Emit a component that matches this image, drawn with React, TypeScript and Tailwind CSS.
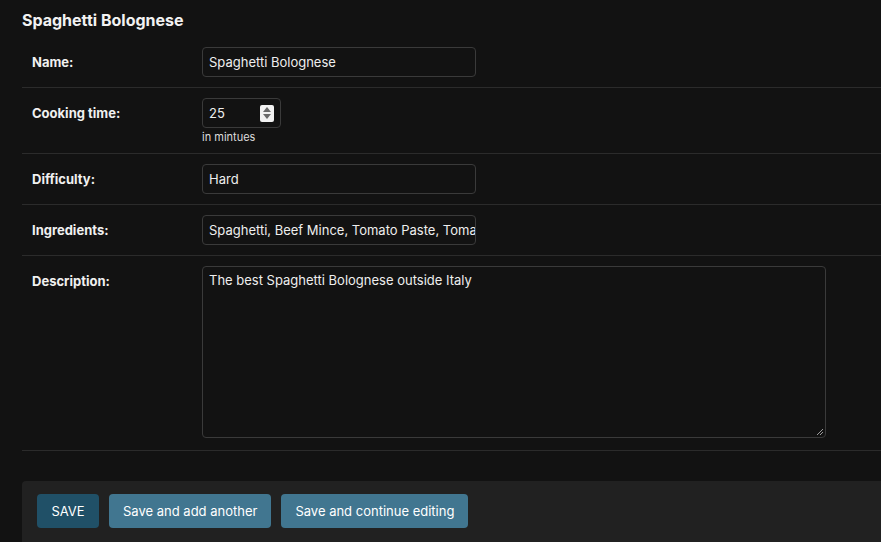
import React from "react";

const font = { fontFamily: 'Inter, "Noto Sans", sans-serif' };

function Row({ label, children }: { label: string; children: React.ReactNode }) {
  return (
    <div className="flex items-start border-b border-[#2b2b2b] p-[10px]">
      <label className="w-[170px] shrink-0 pt-[6px] text-[13px] font-bold text-[#f0f0f0]">{label}</label>
      <div className="flex flex-col">{children}</div>
    </div>
  );
}

export default function App() {
  return (
    <div className="min-h-[542px] w-[881px] overflow-hidden bg-[#121212] pl-[22px] text-[#eeeeee]" style={font}>
      <h2 className="pt-[10px] pb-[7px] text-[16px] font-bold leading-[20px] text-[#f2f2f2]">Spaghetti Bolognese</h2>
      <div className="w-[900px]">
        <Row label="Name:">
          <div className="flex h-[30px] w-[274px] items-center rounded-[4px] border border-[#3a3a3a] px-[6px] pt-[2px] text-[13px]">
            Spaghetti Bolognese
          </div>
        </Row>
        <Row label="Cooking time:">
          <div className="flex h-[30px] w-[79px] items-center justify-between rounded-[4px] border border-[#3a3a3a] pl-[6px] pr-[6px] text-[13px]">
            <span className="pt-[2px]">25</span>
            <div className="flex h-[17px] w-[14px] flex-col items-center justify-center gap-[2px] rounded-[2px] bg-[#f2f2f2]">
              <svg width="8" height="5" viewBox="0 0 8 5"><path d="M4 0L8 5H0z" fill="#6a6a6a" /></svg>
              <svg width="8" height="5" viewBox="0 0 8 5"><path d="M0 0H8L4 5z" fill="#6a6a6a" /></svg>
            </div>
          </div>
          <div className="mt-[3px] text-[11px] leading-[12px] text-[#dddddd]">in mintues</div>
        </Row>
        <Row label="Difficulty:">
          <div className="flex h-[30px] w-[274px] items-center rounded-[4px] border border-[#3a3a3a] px-[6px] pt-[2px] text-[13px]">
            Hard
          </div>
        </Row>
        <Row label="Ingredients:">
          <div className="h-[30px] w-[274px] overflow-hidden rounded-[4px] border border-[#3a3a3a] px-[6px] pt-[2px]">
            <div className="flex h-full items-center whitespace-nowrap text-[13px]">
              Spaghetti, Beef Mince, Tomato Paste, Tomato Sauce
            </div>
          </div>
        </Row>
        <Row label="Description:">
          <div className="relative mb-[2px] h-[172px] w-[624px] rounded-[4px] border border-[#3a3a3a] px-[6px] pt-[4px] text-[13px]">
            The best Spaghetti Bolognese outside Italy
            <svg className="absolute bottom-[1px] right-[1px]" width="8" height="8" viewBox="0 0 8 8">
              <path d="M1 7L7 1M4 7L7 4" stroke="#9a9a9a" strokeWidth="1" />
            </svg>
          </div>
        </Row>
      </div>
      <div className="mt-[30px] flex w-[900px] gap-[10px] rounded-tl-[4px] bg-[#212121] px-[15px] pt-[13px] pb-[20px]">
        <button className="h-[34px] w-[62px] rounded-[4px] bg-[#205067] pt-[2px] text-[13px] text-white">SAVE</button>
        <button className="h-[34px] rounded-[4px] bg-[#417690] px-[14px] pt-[2px] text-[13px] text-white">Save and add another</button>
        <button className="h-[34px] rounded-[4px] bg-[#417690] px-[14px] pt-[2px] text-[13px] text-white">Save and continue editing</button>
      </div>
    </div>
  );
}
